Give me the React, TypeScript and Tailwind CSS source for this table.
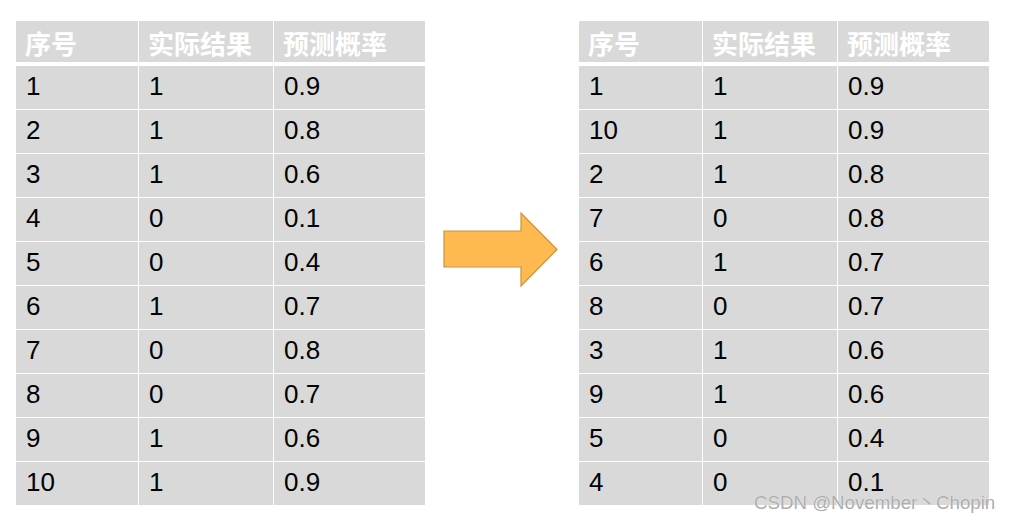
const headers = ['序号', '实际结果', '预测概率'];

const before: [string, string, string][] = [
  ['1', '1', '0.9'],
  ['2', '1', '0.8'],
  ['3', '1', '0.6'],
  ['4', '0', '0.1'],
  ['5', '0', '0.4'],
  ['6', '1', '0.7'],
  ['7', '0', '0.8'],
  ['8', '0', '0.7'],
  ['9', '1', '0.6'],
  ['10', '1', '0.9'],
];

const after: [string, string, string][] = [
  ['1', '1', '0.9'],
  ['10', '1', '0.9'],
  ['2', '1', '0.8'],
  ['7', '0', '0.8'],
  ['6', '1', '0.7'],
  ['8', '0', '0.7'],
  ['3', '1', '0.6'],
  ['9', '1', '0.6'],
  ['5', '0', '0.4'],
  ['4', '0', '0.1'],
];

function DataTable({ rows, cols }: { rows: [string, string, string][]; cols: string }) {
  return (
    <div className="flex flex-col">
      {/* header */}
      <div className={`grid ${cols} gap-x-px h-[41px] mb-[4px]`}>
        {headers.map((h) => (
          <div
            key={h}
            className="bg-[#d9d9d9] flex items-center pl-[9px] text-white font-bold text-[26px] leading-none pt-[2px]"
            style={{ fontFamily: '"Noto Sans CJK SC", sans-serif' }}
          >
            {h}
          </div>
        ))}
      </div>

      <div className="flex flex-col gap-y-px">
        {rows.map((r, i) => (
          <div key={i} className={`grid ${cols} gap-x-px h-[43px]`}>
            {r.map((c, j) => (
              <div
                key={j}
                className="bg-[#d9d9d9] flex items-center pl-[10px] pb-[4px] text-black text-[26px] leading-none font-['Liberation_Sans',Arial,sans-serif]"
              >
                {c}
              </div>
            ))}
          </div>
        ))}
      </div>
    </div>
  );
}

function Arrow() {
  return (
    <svg width="116" height="76" viewBox="0 0 116 76" className="block">
      <polygon
        points="1,19 78,19 78,1 114,37.5 78,74 78,55 1,55"
        fill="#ffb951"
        stroke="#c99340"
        strokeWidth="1.2"
        strokeLinejoin="miter"
      />
    </svg>
  );
}

export default function App() {
  return (
    <div className="relative w-[1009px] h-[523px] bg-white overflow-hidden">
      <div className="flex items-start pt-[21px] pl-[16px]">
        <div className="w-[409px]">
          <DataTable rows={before} cols="grid-cols-[122px_134px_151px]" />
        </div>

        <div className="ml-[18px] mt-[191px]">
          <Arrow />
        </div>

        <div className="ml-[20px] w-[410px]">
          <DataTable rows={after} cols="grid-cols-[123px_134px_151px]" />
        </div>
      </div>

      {/* watermark */}
      <div
        className="absolute left-[754px] top-[494px] text-[18.7px] leading-none text-[#adadad] whitespace-nowrap"
        style={{ fontFamily: '"Liberation Sans", "Noto Sans CJK SC", sans-serif', textShadow: '0 0 1px #ffffff' }}
      >
        CSDN @November丶Chopin
      </div>
    </div>
  );
}
